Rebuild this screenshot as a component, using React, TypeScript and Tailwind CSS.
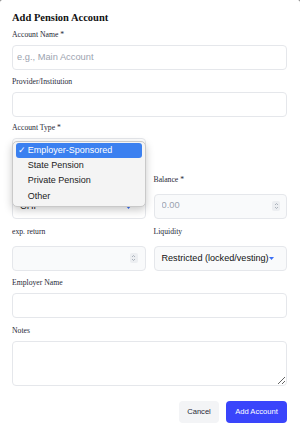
import React from "react";

const serif = { fontFamily: '"Liberation Serif", "Times New Roman", serif' };
const sans = { fontFamily: '"Liberation Sans", Arial, Helvetica, sans-serif' };

function Label({ children, className = "" }: { children?: React.ReactNode; className?: string }) {
  return (
    <div className={`text-[7.7px] leading-[10px] h-[10px] text-[#1f2937] ${className}`} style={serif}>
      {children}
    </div>
  );
}

function Spinner() {
  return (
    <span className="flex h-[10px] w-[8px] items-center justify-center rounded-[2px] bg-[#eceef1]">
      <svg width="5" height="8" viewBox="0 0 5 8" fill="none" stroke="#9ca3af" strokeWidth="0.8">
        <path d="M1 3 L2.5 1.5 L4 3" />
        <path d="M1 5 L2.5 6.5 L4 5" />
      </svg>
    </span>
  );
}

function Caret() {
  return (
    <svg width="5" height="3" viewBox="0 0 5 3" className="shrink-0">
      <path d="M0 0 L5 0 L2.5 3 Z" fill="#3b6ff5" />
    </svg>
  );
}

export default function App() {
  return (
    <div className="w-[300px] h-[434px] bg-[#8a8a8a] overflow-hidden">
      <div className="w-[300px] h-[434px] bg-white rounded-t-[2.5px] pl-[12px] pr-[13px] pt-[10.5px]">
        <div className="text-[10.5px] leading-[13px] h-[13px] font-bold text-[#111]" style={serif}>
          Add Pension Account
        </div>

        <Label className="mt-[6.8px]">Account Name *</Label>
        <input
          className="mt-[4.6px] block h-[25px] w-full rounded-[4px] border border-[#e5e7eb] bg-white px-[4px] text-[9.3px] text-[#111] outline-none placeholder:text-[#9ca3af]"
          style={sans}
          placeholder="e.g., Main Account"
        />

        <Label className="mt-[7.4px]">Provider/Institution</Label>
        <input
          className="mt-[4.6px] block h-[25px] w-full rounded-[4px] border border-[#e5e7eb] bg-white px-[4px] text-[9.3px] outline-none"
          style={sans}
        />

        <Label className="mt-[6.4px]">Account Type *</Label>
        <div className="mt-[4.6px] grid grid-cols-2 gap-[8px]">
          <div className="relative">
            <div
              className="flex h-[25px] items-center justify-end rounded-[4px] border border-[#e5e7eb] bg-white pl-[7px] pr-[14px]"
              style={sans}
            >
              <Caret />
            </div>
            <div
              className="absolute left-[-0.3px] top-[2.7px] z-10 w-[134px] rounded-[5px] border border-[#c9c9c9] bg-[#f4f4f4] px-[3px] py-[1.5px] text-[9px] text-[#222] shadow-[0_3px_8px_rgba(0,0,0,0.22)]"
              style={sans}
            >
              <div className="flex h-[15.4px] items-center rounded-[3px] bg-[#3b80f0] text-white">
                <span className="w-[12px] pl-[2px] text-[9px] leading-none">✓</span>
                <span>Employer-Sponsored</span>
              </div>
              <div className="flex h-[15.2px] items-center pl-[12px]">State Pension</div>
              <div className="flex h-[15.2px] items-center pl-[12px]">Private Pension</div>
              <div className="flex h-[15.2px] items-center pl-[12px]">Other</div>
            </div>
          </div>
          <div />
        </div>

        <div className="mt-[12.4px] grid grid-cols-2 gap-[8px]">
          <div>
            <Label />
            <div
              className="mt-[8.6px] flex h-[25px] items-center justify-between rounded-[4px] border border-[#e5e7eb] bg-white pl-[7px] pr-[14px] pt-[2px] text-[9.3px] text-[#111]"
              style={sans}
            >
              <span>CHF</span>
              <Caret />
            </div>
          </div>
          <div>
            <Label>Balance *</Label>
            <div className="mt-[8.6px] flex h-[25px] items-center rounded-[4px] border border-[#e5e7eb] bg-[#f9fafb] pl-[7px] pr-[6px]">
              <input
                className="min-w-0 flex-1 bg-transparent text-[9.3px] outline-none placeholder:text-[#9ca3af]"
                style={sans}
                placeholder="0.00"
              />
              <Spinner />
            </div>
          </div>
        </div>

        <div className="mt-[8.4px] grid grid-cols-2 gap-[8px]">
          <div>
            <Label>exp. return</Label>
            <div className="mt-[8.6px] flex h-[25px] items-center rounded-[4px] border border-[#e5e7eb] bg-[#f9fafb] pl-[7px] pr-[7px]">
              <input className="min-w-0 flex-1 bg-transparent text-[9.3px] outline-none" style={sans} />
              <Spinner />
            </div>
          </div>
          <div>
            <Label>Liquidity</Label>
            <div
              className="mt-[8.6px] flex h-[25px] items-center justify-between rounded-[4px] border border-[#e5e7eb] bg-[#f9fafb] pl-[7px] pr-[12px] text-[9.1px] text-[#111] whitespace-nowrap"
              style={sans}
            >
              <span>Restricted (locked/vesting)</span>
              <Caret />
            </div>
          </div>
        </div>

        <Label className="mt-[7.4px]">Employer Name</Label>
        <input
          className="mt-[4.9px] block h-[25px] w-full rounded-[4px] border border-[#e5e7eb] bg-white px-[4px] text-[9.3px] outline-none"
          style={sans}
        />

        <Label className="mt-[7.4px]">Notes</Label>
        <textarea
          className="mt-[5px] block h-[45.3px] w-full resize-y rounded-[4px] border border-[#e5e7eb] bg-white px-[4px] text-[9.3px] outline-none"
          style={sans}
        />

        <div className="mt-[15px] flex justify-end gap-[7px]">
          <button
            className="h-[22px] w-[40px] rounded-[4px] bg-[#f3f4f6] text-[7.6px] font-medium text-[#1f2937]"
            style={sans}
          >
            Cancel
          </button>
          <button
            className="h-[22px] w-[61px] rounded-[4px] bg-[#3a45fb] text-[7.6px] font-medium text-white"
            style={sans}
          >
            Add Account
          </button>
        </div>
      </div>
    </div>
  );
}
